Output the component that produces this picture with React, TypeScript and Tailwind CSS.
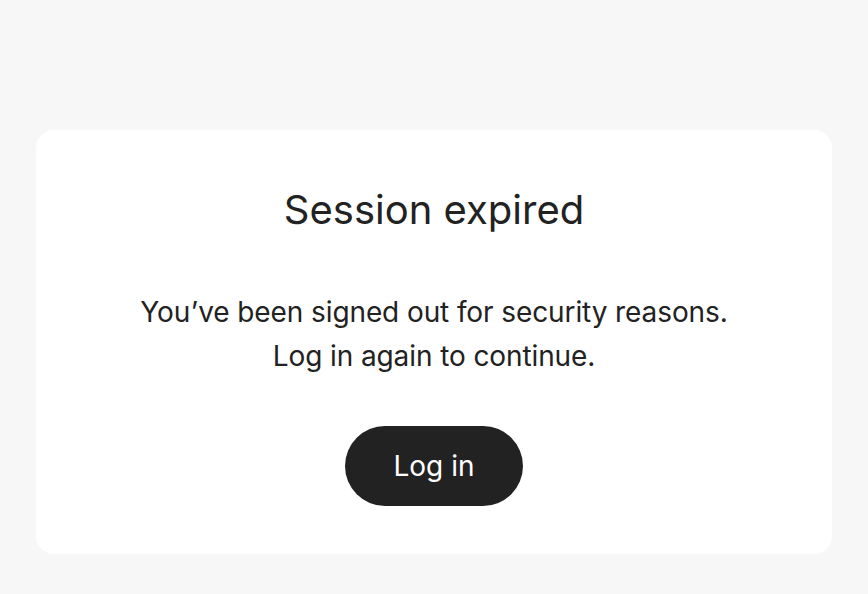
export default function App() {
  return (
    <div className="min-h-[594px] w-full bg-[#f7f7f7] px-9 pt-[130px]" style={{ fontFamily: "Inter, 'Noto Sans', sans-serif" }}>
      <div className="flex flex-col items-center rounded-[18px] bg-white pt-14 pb-12 text-[#222222]">
        <h1 className="text-[40px] leading-[48px] font-normal">Session expired</h1>
        <p className="mt-14 text-center text-[28px] leading-[44px] tracking-[-0.1px]">
          You’ve been signed out for security reasons.
          <br />
          Log in again to continue.
        </p>
        <button className="mt-12 flex h-20 w-[178px] items-center justify-center rounded-full bg-[#222222] text-[28px] text-white">
          Log in
        </button>
      </div>
    </div>
  );
}
